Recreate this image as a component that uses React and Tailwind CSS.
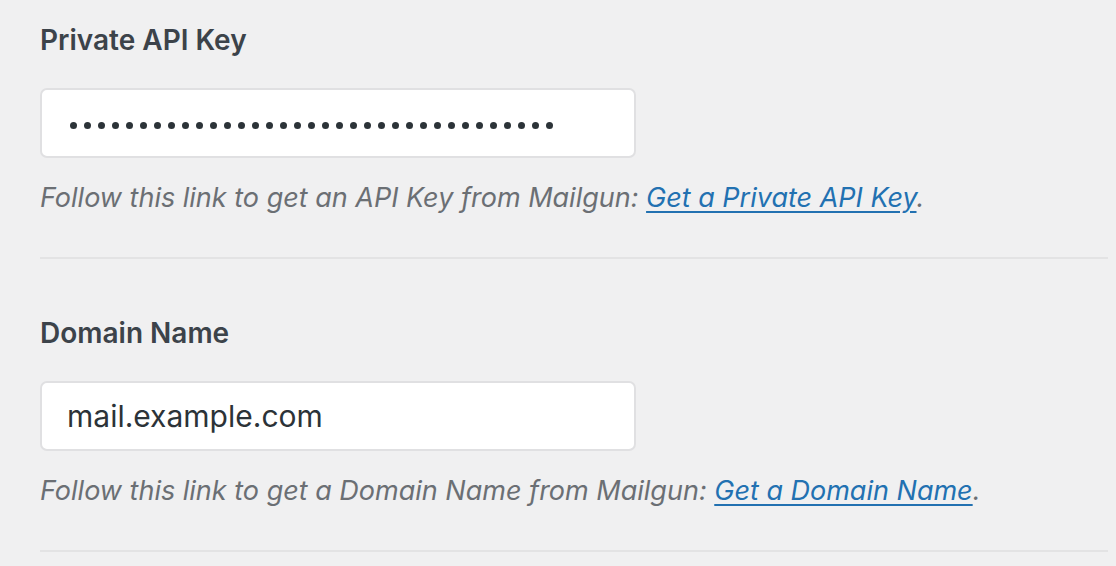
import React from "react";

const font = { fontFamily: "Inter, 'Noto Sans', sans-serif" };

function Dots() {
  return (
    <div className="flex items-center gap-[7px] ml-[3px] mt-[5px]">
      {Array.from({ length: 35 }).map((_, i) => (
        <span key={i} className="block w-[7px] h-[7px] rounded-full bg-[#2c3338]" />
      ))}
    </div>
  );
}

function Section({ first, label, children, desc, linkText }) {
  return (
    <div className={`${first ? "pt-[24px]" : "pt-[58px]"} pb-[43px] border-b-2 border-[#e3e3e4]`}>
      <div className="text-[28px] leading-[32px] font-semibold text-[#3c434a]">{label}</div>
      <div className="mt-8 w-[596px] h-[70px] bg-white border-2 border-[#e0e0e2] rounded-[7px] flex items-center pl-[25px] text-[30px] text-[#2c3338]">
        {children}
      </div>
      <div className="mt-6 text-[27px] leading-[32px] italic text-[#6b6f74]">
        {desc}{" "}
        <a href="#" className="text-[#2271b1] underline underline-offset-[4px] decoration-[2px]">{linkText}</a>.
      </div>
    </div>
  );
}

export default function App() {
  return (
    <div className="w-[1116px] h-[566px] bg-[#f0f0f1] overflow-hidden pl-[40px] pr-[8px]" style={font}>
      <Section
        first
        label="Private API Key"
        desc="Follow this link to get an API Key from Mailgun:"
        linkText="Get a Private API Key"
      >
        <Dots />
      </Section>
      <Section
        label="Domain Name"
        desc="Follow this link to get a Domain Name from Mailgun:"
        linkText="Get a Domain Name"
      >
        mail.example.com
      </Section>
    </div>
  );
}
